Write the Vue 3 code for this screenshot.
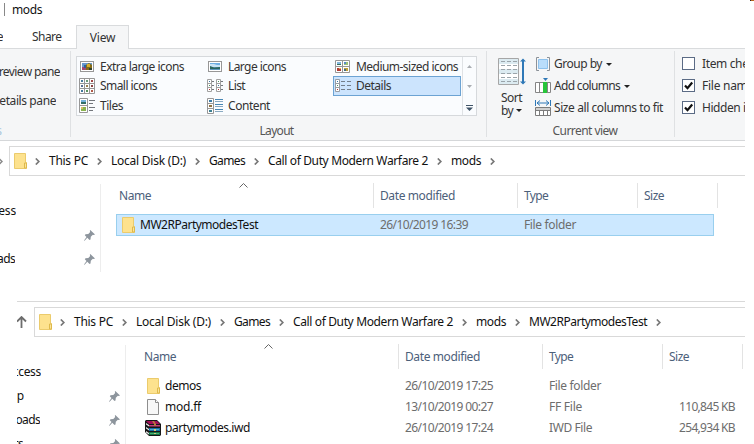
<script setup>
// Sets tracking so that a label takes the given width in pixels.
const vFit = {
  mounted(el, { value }) {
    if (!value) return
    const natural = el.getBoundingClientRect().width
    el.style.letterSpacing = (value - natural) / el.textContent.length + 'px'
  },
}

const gallery = [
  { icon: 'xl', label: 'Extra large icons', w: 84 },
  { icon: 'lg', label: 'Large icons', w: 58 },
  { icon: 'md', label: 'Medium-sized icons', w: 102 },
  { icon: 'sm', label: 'Small icons', w: 57 },
  { icon: 'list', label: 'List', w: 17 },
  { icon: 'details', label: 'Details', w: 35, on: true },
  { icon: 'tiles', label: 'Tiles', w: 23 },
  { icon: 'content', label: 'Content', w: 42 },
]

const options = [
  { label: 'Item check boxes', w: 92, on: false },
  { label: 'File name extensions', w: 113, on: true },
  { label: 'Hidden items', w: 70, on: true },
]

const path = [
  { label: 'This PC', w: 39 },
  { label: 'Local Disk (D:)', w: 75 },
  { label: 'Games', w: 36 },
  { label: 'Call of Duty Modern Warfare 2', w: 160 },
  { label: 'mods', w: 30 },
]

const panes = [
  {
    id: 'first',
    path,
    nav: [
      { label: 'Quick access', w: 70 },
      { label: '', w: 0, pin: true },
      { label: 'Downloads', w: 57, pin: true },
    ],
    rows: [
      { icon: 'folder', name: 'MW2RPartymodesTest', w: 118, date: '26/10/2019 16:39', type: 'File folder', tw: 52, size: '', on: true },
    ],
  },
  {
    id: 'second',
    path: [...path, { label: 'MW2RPartymodesTest', w: 118 }],
    nav: [
      { label: 'Quick access', w: 68 },
      { label: 'Desktop', w: 46, pin: true },
      { label: 'Downloads', w: 57, pin: true },
      { label: 'Documents', w: 59, pin: true },
    ],
    rows: [
      { icon: 'folder', name: 'demos', w: 36, date: '26/10/2019 17:25', type: 'File folder', tw: 52, size: '' },
      { icon: 'file', name: 'mod.ff', w: 36, date: '13/10/2019 00:27', type: 'FF File', tw: 33, size: '110,845 KB' },
      { icon: 'rar', name: 'partymodes.iwd', w: 85, date: '26/10/2019 17:24', type: 'IWD File', tw: 43, size: '254,934 KB' },
    ],
  },
]

const nine = [0, 1, 2, 3, 4, 5, 6, 7, 8]
const dots = ['#4a7a9c', '#6b9a78', '#a04848', '#5a6f96', '#9a8050', '#8b4545', '#43789c', '#58925e', '#b05a48']
</script>

<template>
  <main class="screen">
    <div class="title"><i class="bar"></i><span v-fit="30">mods</span><i class="speck"></i></div>

    <div class="tabs">
      <div class="tab home"><span v-fit="32">Home</span></div>
      <div class="tab share"><span v-fit="29.5">Share</span></div>
      <div class="tab view"><span v-fit="25.5">View</span></div>
    </div>

    <div class="ribbon">
      <section class="panes">
        <div class="pl preview"><span v-fit="68">Preview pane</span></div>
        <div class="pl detail"><span v-fit="65">Details pane</span></div>
        <div class="pl pcap">s</div>
      </section>

      <section class="layout">
        <div class="gallery">
          <div class="grid">
            <div v-for="g in gallery" :key="g.label" class="cell" :class="{ on: g.on }">
              <svg class="gi" width="16" height="16" viewBox="0 0 16 16">
                <g v-if="g.icon === 'xl'">
                  <rect x="1.5" y="2.5" width="13" height="10" fill="#fff" stroke="#979797" />
                  <rect x="3" y="4" width="10" height="7" fill="#6799cd" />
                  <path d="M3 8h4v3H3z" fill="#a44870" /><path d="M7 6l3-2 3 2v5H7z" fill="#846c18" />
                  <path d="M8 5h3v3H8z" fill="#d7af2d" /><path d="M5 6h2v3H5z" fill="#325e9b" />
                  <path d="M10 9h3v2h-3z" fill="#303f2c" />
                </g>
                <g v-else-if="g.icon === 'lg'">
                  <rect x="1.5" y="2.5" width="13" height="10" fill="#fff" stroke="#979797" />
                  <rect x="3" y="4" width="10" height="7" fill="#6eafe4" />
                  <path d="M3 5h4l3 1h3v2H3z" fill="#c9e3f5" /><path d="M3 7l4 1.500 6-.5v3H3z" fill="#2b665f" />
                  <path d="M3 10h10v1H3z" fill="#5d95bb" />
                </g>
                <g v-else-if="g.icon === 'md'">
                  <path d="M.5 1.500h14v12H.5zM7.500 1.500v12M.5 7.500h14" fill="#fff" stroke="#979797" />
                  <path d="M2 3h4v3H2z" fill="#83b7dd" /><path d="M2 5h4v1H2z" fill="#35705e" />
                  <path d="M9 3h4v3H9z" fill="#9abf78" /><path d="M9 3h2v2H9z" fill="#578ac6" />
                  <path d="M2 9h4v3H2z" fill="#b33b31" /><path d="M4 9h2v1H4z" fill="#e1a95c" />
                  <path d="M9 9h4v3H9z" fill="#c2a137" /><path d="M9 10h2v2H9z" fill="#476c7c" />
                </g>
                <g v-else-if="g.icon === 'sm'">
                  <path d="M.5.5h15v15H.5zM5.500 0v16M10.500 0v16M0 5.500h16M0 10.500h16" fill="#fff" stroke="#979797" />
                  <rect v-for="n in nine" :key="n" :x="2 + (n % 3) * 5" :y="2 + Math.floor(n / 3) * 5" width="2" height="2" :fill="dots[n]" />
                </g>
                <g v-else-if="g.icon === 'list'">
                  <path d="M.5 1.500h4v12h-4zM.5 5.500h4M.5 9.500h4M9.500 1.500h4v12h-4zM9.500 5.500h4M9.500 9.500h4" fill="#fff" stroke="#a0a0a0" />
                  <path d="M2 3h1v1H2zM11 7h1v1h-1z" fill="#3878a5" /><path d="M2 7h1v1H2zM11 3h1v1h-1z" fill="#4c9260" />
                  <path d="M2 11h1v1H2zM11 11h1v1h-1z" fill="#b83030" />
                  <path d="M5 3.500h2M5 7.500h2M5 11.500h2M14 3.500h2M14 7.500h2M14 11.500h2" stroke="#73777c" />
                </g>
                <g v-else-if="g.icon === 'details'">
                  <path d="M.5 1.500h4v12h-4zM.5 5.500h4M.5 9.500h4" fill="#fff" stroke="#979da4" />
                  <path d="M2 3h1v1H2z" fill="#3878a5" /><path d="M2 7h1v1H2z" fill="#4c9260" /><path d="M2 11h1v1H2z" fill="#b83030" />
                  <path d="M6 3.500h4M6 7.500h4M6 11.500h4M12 3.500h4M12 7.500h4M12 11.500h4" stroke="#737e8b" />
                </g>
                <g v-else-if="g.icon === 'tiles'">
                  <path d="M.5.5h8v14h-8zM.5 7.500h8" fill="#fff" stroke="#979797" />
                  <path d="M2 2h5v4H2z" fill="#73b2dc" /><path d="M2 4h5v2H2z" fill="#336f67" />
                  <path d="M2 9h5v4H2z" fill="#89b34f" /><path d="M2 9h2v2H2z" fill="#d9bd66" />
                  <path d="M10 2.500h6M10 5.500h4M10 9.500h6M10 12.500h4" stroke="#73777c" />
                </g>
                <g v-else>
                  <path d="M.5.5h6v15h-6zM.5 5.500h6M.5 10.500h6" fill="#fff" stroke="#979797" />
                  <path d="M2 2h3v2H2z" fill="#3c7ca8" /><path d="M2 7h3v2H2z" fill="#8f7140" /><path d="M2 12h3v2H2z" fill="#3f8295" />
                  <path d="M8 1.500h8M8 6.500h8M8 11.500h8" stroke="#4787b5" /><path d="M8 3.500h8M8 8.500h8M8 13.500h8" stroke="#8aaac2" />
                </g>
              </svg>
              <span v-fit="g.w">{{ g.label }}</span>
            </div>
          </div>
          <div class="scroll">
            <svg width="5" height="3"><path d="M0 3L2.500 0 5 3z" fill="#a9adb2" /></svg>
            <svg width="5" height="3"><path d="M0 0h5L2.500 3z" fill="#a9adb2" /></svg>
            <svg width="7" height="6"><path d="M0 0h7v1H0z" fill="#3f5468" /><path d="M0 2.500h7L3.500 6z" fill="#3f5468" /></svg>
          </div>
        </div>
        <div class="cap"><span v-fit="34">Layout</span></div>
      </section>

      <section class="current">
        <div class="tools">
          <div class="sort">
            <svg width="28" height="28" viewBox="0 0 28 28">
              <path d="M.5.5h20v26H.5z" fill="#fff" stroke="#a6a6a6" />
              <path d="M1 1h19v5H1zM1 11h19v5H1zM1 21h19v5H1z" fill="#dcebf1" />
              <path d="M3 3.500h16M3 7.500h16M3 11.500h16M3 15.500h16M3 19.500h16M3 23.500h16" stroke="#9aa4aa" stroke-dasharray="4 2" />
              <path d="M25 2v23" stroke="#2e78b7" stroke-width="2" />
              <path d="M22 3.500L25 .5l3 3zM22 23.500l3 3 3-3z" fill="#2e78b7" />
            </svg>
            <span v-fit="21" class="s1">Sort</span>
            <div class="s2"><span v-fit="12">by</span><svg width="6" height="3"><path d="M0 0h6L3 3z" fill="#222" /></svg></div>
          </div>
          <div class="cmds">
            <div class="cmd">
              <svg width="16" height="16" viewBox="0 0 16 16">
                <path d="M4 1.500H1.500v13H4M12 1.500h2.500v13H12" fill="none" stroke="#8c9299" />
                <path d="M3.500 3.500h9v9h-9z" fill="#b9ddfb" stroke="#8dc1ec" />
              </svg>
              <span v-fit="48">Group by</span><svg class="dd" width="6" height="3"><path d="M0 0h6L3 3z" fill="#222" /></svg>
            </div>
            <div class="cmd">
              <svg width="16" height="16" viewBox="0 0 16 16">
                <path d="M.5 4.500h15v10H.5zM4.500 4v10M12.500 4v10" fill="#fff" stroke="#858585" />
                <path d="M8 4h4v11H8z" fill="#27c53a" /><path d="M8 0h5l-2.500 3z" fill="#2e78b7" />
              </svg>
              <span v-fit="66">Add columns</span><svg class="dd" width="6" height="3"><path d="M0 0h6L3 3z" fill="#222" /></svg>
            </div>
            <div class="cmd">
              <svg width="16" height="16" viewBox="0 0 16 16">
                <path d="M.5 0v6M15.500 0v6M2 3h12M5 .5L2 3l3 2.500M11 .5L14 3l-3 2.500" fill="none" stroke="#2e78b7" />
                <path d="M.5 7.500h15v8H.5zM4.500 10v6M8.500 10v6M12.500 10v6" fill="#fff" stroke="#7c7c7c" />
                <path d="M1 8h14v2H1z" fill="#cfcfcf" /><path d="M0 10.500h16" stroke="#7c7c7c" />
              </svg>
              <span v-fit="109">Size all columns to fit</span>
            </div>
          </div>
        </div>
        <div class="cap"><span v-fit="65">Current view</span></div>
      </section>

      <section class="opts">
        <div v-for="o in options" :key="o.label" class="opt">
          <svg width="13" height="13" viewBox="0 0 13 13">
            <rect x=".5" y=".5" width="12" height="12" fill="#fff" stroke="#5b6b85" />
            <path v-if="o.on" d="M3 6.500L5.500 9.200 10.200 3.500" fill="none" stroke="#111" stroke-width="2.200" />
          </svg>
          <span v-fit="o.w">{{ o.label }}</span>
        </div>
      </section>
    </div>

    <div v-for="p in panes" :key="p.id" class="pane" :class="p.id">
      <div class="addr">
        <div class="lead">
          <svg v-if="p.id === 'second'" width="10" height="12" viewBox="0 0 10 12"><path d="M4.500 12V1.500M0 5.500l4.500-4.500L9 5.500" fill="none" stroke="#6d6d6d" stroke-width="1.800" /></svg>
          <svg v-else width="3" height="7" viewBox="0 0 3 7"><path d="M-1 .5l3 3-3 3" fill="none" stroke="#888" stroke-width="1.500" /></svg>
        </div>
        <div class="box">
          <svg class="folder" width="14" height="16" viewBox="0 0 14 16"><path d="M.5.5h11v9h1v6H.5z" fill="#fde28e" stroke="#ebcb6c" /><path d="M10.500 15V10h2v5z" fill="#fbe49b" stroke="#deb94b" /></svg>
          <svg class="chev" width="5" height="7" viewBox="0 0 5 7"><path d="M.8.5l3 3-3 3" fill="none" stroke="#777" stroke-width="1.700" /></svg>
          <template v-for="c in p.path" :key="c.label">
            <span v-fit="c.w">{{ c.label }}</span>
            <svg class="chev" width="5" height="7" viewBox="0 0 5 7"><path d="M.8.5l3 3-3 3" fill="none" stroke="#777" stroke-width="1.700" /></svg>
          </template>
        </div>
      </div>

      <div class="body">
        <nav class="nav">
          <div v-for="(n, i) in p.nav" :key="i" class="item">
            <div class="clip"><span v-fit="n.w">{{ n.label }}</span></div>
            <svg v-if="n.pin" class="pin" width="11" height="11" viewBox="0 0 11 11"><path d="M6.300 0L11 4.500 9.800 5 8.800 4.700 6.800 6.800 6.500 9.500 5.500 10 3.300 7.800.6 10.700 0 10.500 2.500 7 .8 5.200 1.500 4.200 4.300 4 6.200 2 5.800.8z" fill="#8d959d" /></svg>
          </div>
        </nav>
        <div class="list">
          <div class="head">
            <div class="h name">
              <span v-fit="32">Name</span>
              <svg class="caret" width="9" height="5" viewBox="0 0 9 5"><path d="M.5 4.500l4-4 4 4" fill="none" stroke="#666" /></svg>
            </div>
            <div class="h date"><span v-fit="75">Date modified</span></div>
            <div class="h type"><span v-fit="24">Type</span></div>
            <div class="h size"><span v-fit="20">Size</span></div>
          </div>
          <div class="rows">
            <div v-for="r in p.rows" :key="r.name" class="row" :class="{ on: r.on }">
              <div class="c fname">
                <svg v-if="r.icon === 'folder'" width="16" height="16" viewBox="0 0 16 16"><path d="M.5.5h11v9h1v6H.5z" fill="#fde28e" stroke="#ebcb6c" /><path d="M10.500 15V10h2v5z" fill="#fbe49b" stroke="#deb94b" /></svg>
                <svg v-else-if="r.icon === 'file'" width="16" height="16" viewBox="0 0 16 16"><path d="M.5.500h8l3 3v12H.5z" fill="#f8f8f8" stroke="#8e8e8e" /><path d="M8.500.5v3h3" fill="#fff" stroke="#8e8e8e" /></svg>
                <svg v-else class="rar" width="16" height="16" viewBox="0 0 16 16">
                  <path d="M0 1l1-1h11l4 4v11l-1 1H4l-4-4z" fill="#161616" />
                  <path d="M1 1h11l3 3H4z" fill="#a20c56" /><path d="M4 5h11v1.500H4z" fill="#c33b78" />
                  <path d="M1 3l3 2v1.500L1 4.500zM1 7l3 2v1.500L1 8.500zM1 11l3 2v1.500L1 12.500z" fill="#e9e9e9" />
                  <path d="M4 8h11v3H4z" fill="#1770a6" /><path d="M5 9h9v1H5z" fill="#4da8cf" />
                  <path d="M4 12h11v3H4z" fill="#157645" /><path d="M5 13h9v1H5z" fill="#48ae71" />
                  <path d="M9 1l2 3v2H9V4L7 1z" fill="#b7793e" /><path d="M9 9h2v2H9zM9 13h2v1H9z" fill="#d5c87b" />
                </svg>
                <span v-fit="r.w">{{ r.name }}</span>
              </div>
              <div class="c fdate"><span v-fit="88">{{ r.date }}</span></div>
              <div class="c ftype"><span v-fit="r.tw">{{ r.type }}</span></div>
              <div class="c fsize"><span v-if="r.size" v-fit="56">{{ r.size }}</span></div>
            </div>
          </div>
        </div>
      </div>
    </div>
  </main>
</template>

<style>
body { margin: 0; background: #fff; }
</style>

<style scoped>
* { box-sizing: border-box; }
.screen { width: 754px; height: 444px; overflow: hidden; background: #fff; font: 12px/16px "Noto Sans", "Open Sans", sans-serif; color: #111; }
svg { display: block; flex: none; }
span { white-space: pre; flex: none; }
.title { height: 25px; display: flex; align-items: flex-start; padding: 2px 0 0 4px; }
.title .bar { width: 1px; height: 13px; margin: 1px 7px 0 0; background: #888; }
.title .speck { width: 4px; height: 1px; margin: -2px 0 0 auto; background: #b7651c; border-left: 1px solid #222; }
.tabs { height: 24px; width: 745px; display: flex; border-bottom: 1px solid #d9dbdd; color: #333; }
.tab { height: 24px; display: flex; align-items: center; flex: none; }
.home { width: 3px; justify-content: flex-end; overflow: hidden; }
.share { width: 73px; padding-left: 29px; }
.view { width: 53px; justify-content: center; background: #f5f6f7; border: 1px solid #d9dbdd; border-bottom: 0; }
.ribbon { width: 745px; height: 92px; display: flex; background: #f5f6f7; border-bottom: 1px solid #d5d7d9; overflow: hidden; padding-top: 2px; color: #333; }
.panes { width: 71px; height: 86px; border-right: 1px solid #dfe1e3; flex: none; }
.pl { display: flex; justify-content: flex-end; overflow: hidden; height: 16px; }
.preview { width: 60px; margin-top: 13px; }
.detail { width: 56px; margin-top: 13px; }
.pcap { width: 2px; margin-top: 14px; color: #a9c6db; }
.layout { width: 416px; height: 86px; border-right: 1px solid #dfe1e3; padding: 5px 9px 0 5px; flex: none; }
.gallery { width: 401px; height: 60px; border: 1px solid #d6d9dc; background: #fafcfe; display: flex; }
.grid { width: 385px; display: grid; grid-template-columns: 128px 128px 129px; grid-template-rows: 19px 20px 19px; }
.cell { display: flex; align-items: center; gap: 5px; padding-left: 2px; }
.cell.on { background: #cce4fd; box-shadow: inset 0 0 0 1px #6ca3d3; width: 128px; }
.scroll { width: 14px; border-left: 1px solid #dfe2e5; display: flex; flex-direction: column; align-items: center; padding-top: 8px; gap: 17px; }
.cap { height: 16px; display: flex; justify-content: center; color: #555; }
.layout .cap { margin-top: 7px; }
.current { width: 188px; height: 86px; border-right: 1px solid #dfe1e3; padding: 5px 0 0 11px; flex: none; }
.tools { display: flex; height: 67px; }
.sort { width: 28px; margin-right: 11px; padding-top: 2px; }
.s1 { display: block; margin: 5px 0 0 3px; line-height: 13px; width: max-content; }
.s2 { display: flex; align-items: center; gap: 3px; padding-left: 3px; line-height: 13px; height: 13px; }
.cmds { display: flex; flex-direction: column; margin: -3px 0 0 -2px; }
.cmd { height: 22px; display: flex; align-items: center; gap: 3px; }
.dd { margin-left: 1px; }
.current .cap { padding-right: 2px; }
.opts { padding: 2px 0 0 7px; flex: none; }
.opt { height: 22px; display: flex; align-items: center; gap: 7px; }
.opt svg { margin-bottom: 1px; }
.addr { display: flex; height: 30px; }
.box { flex: 1; display: flex; align-items: center; border: 1px solid #d9d9d9; border-right: 0; padding-left: 4px; gap: 9px; overflow: hidden; }
.box .folder { margin-right: -2px; }
.lead { display: flex; align-items: center; flex: none; }
.first { margin-top: 5px; width: 745px; height: 155px; }
.first .lead { width: 9px; }
.second { width: 728px; margin-left: 17px; padding-top: 5px; border-top: 1px solid #d9d9d9; height: 143px; }
.second .lead { width: 17px; }
.body { display: flex; padding-top: 8px; }
.nav { width: 101px; height: 88px; border-right: 1px solid #ededed; flex: none; padding-top: 15px; }
.second .nav { width: 109px; height: 100px; padding-top: 15px; overflow: hidden; }
.item { height: 24px; display: flex; align-items: center; }
.clip { width: 16px; height: 20px; display: flex; align-items: center; justify-content: flex-end; overflow: hidden; }
.first .item:nth-child(3) .clip { width: 15px; }
.second .item:nth-child(1) .clip { width: 24px; }
.second .item:nth-child(2) .clip { width: 7px; }
.second .item:nth-child(3) .clip { width: 23px; }
.second .item:nth-child(4) .clip { width: 6px; }
.pin { margin: 0 5px 0 auto; }
.list { flex: 1; }
.head { display: flex; height: 24px; margin-top: -1px; color: #4c607a; }
.h { border-right: 1px solid #e3e3e3; height: 25px; display: flex; align-items: center; padding: 1px 0 0 6px; flex: none; }
.h.name { width: 273px; padding-left: 18px; position: relative; }
.caret { position: absolute; left: 138px; top: 0; }
.h.date { width: 144px; }
.h.type { width: 120px; }
.h.size { width: 80px; }
.rows { padding: 7px 0 0 15px; }
.row { width: 598px; height: 21px; display: flex; align-items: center; color: #6d6d6d; border: 1px solid transparent; }
.row.on { height: 22px; background: #cce8ff; border-color: #99cfee; }
.c { display: flex; align-items: center; flex: none; }
.fname { width: 263px; padding-left: 5px; gap: 2px; color: #111; }
.rar { margin: 0 2px 0 -2px; }
.fdate { width: 144px; }
.ftype { width: 120px; }
.fsize { width: 66px; justify-content: flex-end; }
</style>
